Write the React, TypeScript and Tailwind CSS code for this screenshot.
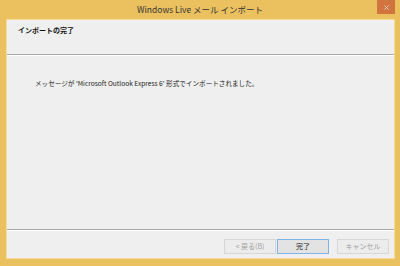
import { X } from "lucide-react";

const FONT = "font-['Noto_Sans_CJK_JP',sans-serif]";

function WizardButton({ label, primary = false }: { label: string; primary?: boolean }) {
  return (
    <button
      className={`flex h-[15px] w-[52px] items-center justify-center border text-[7px] leading-none ${
        primary ? "border-[#7eb4ea] bg-[#e3e3e3] text-[#1a1a1a]" : "border-[#d6d6d6] bg-[#ececec] text-[#a0a0a0]"
      }`}
    >
      {label}
    </button>
  );
}

export default function App() {
  return (
    <div className={`relative flex h-[266px] w-[400px] flex-col bg-[#ebc160] ${FONT}`}>
      <div className="flex h-[19px] items-center justify-center text-[8.5px] text-[#333]">
        Windows Live メール インポート
      </div>
      <div className="absolute right-[5px] top-0 flex h-[14px] w-[18px] items-center justify-center bg-[#d2743f]">
        <X className="h-[7px] w-[7px] text-[#f6d9c8]" strokeWidth={3} />
      </div>
      <div className="mb-[7px] ml-[6px] mr-[5px] flex flex-1 flex-col border border-[#f5dc98] bg-[#efefef]">
        <div className="h-[34px] px-[11px] pt-[5px] text-[7px] font-bold text-[#111]">インポートの完了</div>
        <div className="h-px bg-[#a8a8a8]" />
        <div className="h-px bg-white" />
        <div className="flex-1 px-[28px] pt-[23px] text-[6.6px] text-[#222]">
          メッセージが 'Microsoft Outlook Express 6' 形式でインポートされました。
        </div>
        <div className="h-px bg-[#a8a8a8]" />
        <div className="h-px bg-white" />
        <div className="flex h-[27px] items-start justify-end pr-[5px] pt-[8px]">
          <div className="flex gap-[1px]">
            <WizardButton label="< 戻る(B)" />
            <WizardButton label="完了" primary />
          </div>
          <div className="ml-[8px]">
            <WizardButton label="キャンセル" />
          </div>
        </div>
      </div>
    </div>
  );
}
